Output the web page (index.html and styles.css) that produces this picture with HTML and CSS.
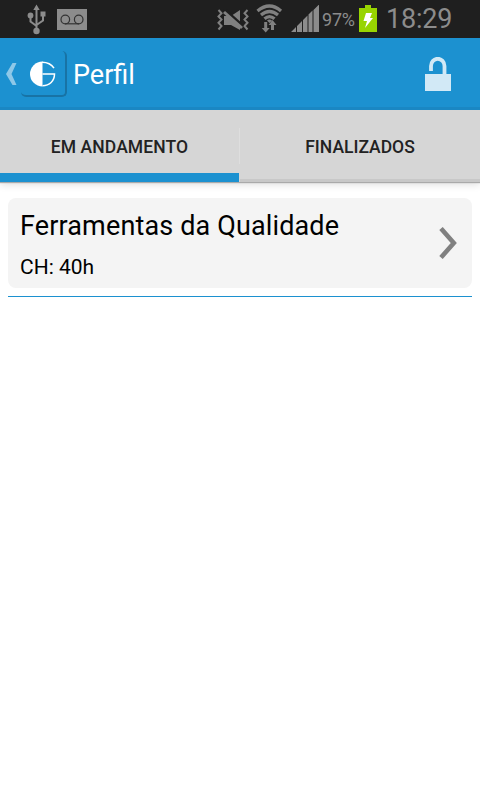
FILE: index.html
```html
<!DOCTYPE html>
<html lang="pt-BR">
<head>
    <meta charset="UTF-8">
    <meta name="viewport" content="width=device-width, initial-scale=1.0">
    <title>Perfil</title>
    <link rel="stylesheet" href="styles.css">
</head>
<body>
    <!-- Barra de status -->
    <div class="status-bar">
        <svg class="usb" width="20" height="32" viewBox="0 0 20 32">
            <path d="M9.500 5v22M3.500 12v5.500l6 4.500M16 10v6.500l-6.500 4.500" fill="none" stroke="#8c8c8c" stroke-width="2"/>
            <path d="M9.500 .5L12.700 6H6.300zM13.500 7.500h5v5h-5z" fill="#8c8c8c"/>
            <circle cx="3.500" cy="11.500" r="2.900" fill="#8c8c8c"/>
            <circle cx="9.500" cy="27" r="3.200" fill="#8c8c8c"/>
        </svg>
        <svg class="voicemail" width="30" height="21" viewBox="0 0 30 21">
            <path d="M0 0h30v21H0z" fill="#8c8c8c"/>
            <g fill="none" stroke="#333" stroke-width="1.200">
                <circle cx="8.300" cy="10.500" r="4.300"/>
                <circle cx="21.700" cy="10.500" r="4.300"/>
                <path d="M8 14.800h14"/>
            </g>
        </svg>
        <svg class="mute" width="34" height="22" viewBox="0 0 34 22">
            <path d="M1.500 1l3 3.200-3 3.200 3 3.200-3 3.200 3 3.200-3 3.500M30.500 1l-3 3.200 3 3.200-3 3.200 3 3.200-3 3.200 3 3.500" fill="none" stroke="#808080" stroke-width="2"/>
            <path d="M7 7h7l9-6v20l-9-5H7z" fill="#808080"/>
            <path d="M7 0L26 17" fill="none" stroke="#1f1f1f" stroke-width="3"/>
            <path d="M7 3L25 19" fill="none" stroke="#808080" stroke-width="3"/>
        </svg>
        <svg class="wifi" width="28" height="30" viewBox="0 0 28 30">
            <g fill="none" stroke="#808080" stroke-width="3.200">
                <path d="M1.500 7Q13.500 -3 25 7"/>
                <path d="M5 11q8.500-7 17 0"/>
                <path d="M8.500 14.800q5-4.500 10 0"/>
            </g>
            <path d="M11 16.500q2.500-1.800 5 0L13.500 19zM8.200 18h3v6h2.500L9.700 28.500 5.700 24h2.500zM15 26v-5h-2.500l4-5 4 5H18v5z" fill="#808080"/>
        </svg>
        <svg class="signal" width="30" height="28" viewBox="0 0 30 28">
            <path d="M0 27l5-5v5zM6 27v-6l5-5v11zM12 27V15l4.500-4.500V27zM17.500 27V9.500L21.500 5.500V27zM22.500 27V5l5-5H28v27z" fill="#8c8c8c"/>
        </svg>
        <span class="percent">97%</span>
        <svg class="battery" width="18" height="27" viewBox="0 0 18 27">
            <path d="M6 0h6v3h6v24H0V3h6z" fill="#98d401"/>
            <path d="M7 8h6l-2 5h3L6 23l2-7H4.500z" fill="#fff"/>
        </svg>
        <span class="clock">18:29</span>
    </div>

    <!-- Cabeçalho -->
    <header class="action-bar">
        <svg class="back" width="11" height="22" viewBox="0 0 11 22">
            <path d="M6.500 0H10.500L5.500 11 10.500 22H6.500L0 11z" fill="#8ec8e8"/>
        </svg>
        <div class="logo">
            <svg width="26" height="26" viewBox="0 0 26 26">
                <path d="M12.500 .5a12.300 12.300 0 0 0 0 25z" fill="#fff"/>
                <path d="M12 1.200c5 0 9.500 2 12 6M12.500 13h12c0 7-5 11.700-12 11.700" fill="none" stroke="#fff" stroke-width="1.500"/>
            </svg>
        </div>
        <h1>Perfil</h1>
        <svg class="lock" width="26" height="35" viewBox="0 0 26 35">
            <path d="M6 14V9a6.700 7.200 0 0 1 13.500 0v9" fill="none" stroke="#d2e9f6" stroke-width="3.800"/>
            <path d="M0 17h26v17H0z" fill="#d2e9f6"/>
        </svg>
    </header>

    <!-- Abas -->
    <nav class="tabs">
        <a class="tab active"><span>EM ANDAMENTO</span></a>
        <i class="divider"></i>
        <a class="tab"><span>FINALIZADOS</span></a>
    </nav>

    <!-- Lista de cursos -->
    <main class="list">
        <div class="item">
            <div class="card">
                <div class="info">
                    <h2>Ferramentas da Qualidade</h2>
                    <p>CH: 40h</p>
                </div>
                <svg class="arrow" width="18" height="32" viewBox="0 0 18 32">
                    <path d="M2 1.500L14.800 16 2 30.500" fill="none" stroke="#808080" stroke-width="4.600"/>
                </svg>
            </div>
        </div>
    </main>
</body>
</html>
```
FILE: styles.css
```css
* {
    margin: 0;
    padding: 0;
    box-sizing: border-box;
}

body {
    height: 100vh;
    font-family: Roboto, sans-serif;
    background: #fff;
    overflow: hidden;
}

svg {
    display: block;
    flex: none;
}

/* Barra de status */
.status-bar {
    display: flex;
    align-items: flex-start;
    height: 38px;
    padding-left: 27px;
    background: #1f1f1f;
    color: #8c8c8c;
}

.usb {
    margin-top: 4px;
}

.voicemail {
    margin: 9px 0 0 10px;
}

.mute {
    margin: 9px 0 0 130px;
}

.wifi {
    margin: 4px 0 0 5px;
}

.signal {
    margin: 5px 0 0 7px;
}

.percent {
    width: 37px;
    margin-left: 1px;
    padding-top: 9px;
    font-size: 18px;
    line-height: 22px;
    letter-spacing: -0.2px;
}

.battery {
    margin-top: 5px;
}

.clock {
    margin-left: 9px;
    padding-top: 3px;
    font-size: 27px;
    line-height: 32px;
    letter-spacing: -0.2px;
}

/* Cabeçalho */
.action-bar {
    position: relative;
    z-index: 1;
    display: flex;
    align-items: center;
    height: 72px;
    padding: 3px 29px 0 6px;
    background: #1c91d0;
    border-bottom: 3px solid #1a87c3;
    color: #fff;
}

.logo {
    display: flex;
    align-items: center;
    justify-content: center;
    width: 46px;
    height: 46px;
    margin-left: 4px;
    padding-top: 2px;
    border-radius: 5px;
    border-right: 2px solid #1873a5;
    border-bottom: 2px solid #1873a5;
}

.action-bar h1 {
    margin-left: 6px;
    padding-top: 2px;
    font-size: 27px;
    font-weight: 400;
    line-height: 32px;
}

.lock {
    margin-left: auto;
}

/* Abas */
.tabs {
    display: flex;
    height: 72px;
    background: #d6d6d6;
    box-shadow: 0 1px 1px #aaa, 0 2px 8px rgba(0, 0, 0, 0.15);
}

.tab {
    display: flex;
    flex: 1;
    align-items: center;
    justify-content: center;
    border-bottom: 3px solid #c8c8c8;
    color: #222;
    font-size: 17.5px;
    font-weight: 500;
}

.tab span {
    padding-top: 4px;
}

.tab.active {
    flex: 0 0 239px;
    border-bottom: 9px solid #1c91d0;
    letter-spacing: 0.1px;
}

.tab.active span {
    padding-top: 10px;
}

.divider {
    width: 1px;
    height: 36px;
    margin: 18px 0;
    background: #dedede;
}

/* Lista de cursos */
.list {
    padding: 16px 8px 0;
}

.item {
    padding-bottom: 8px;
    border-bottom: 1px solid #1c91d0;
}

.card {
    display: flex;
    align-items: center;
    justify-content: space-between;
    height: 90px;
    padding: 0 15px 0 12px;
    border-radius: 8px;
    background: #f4f4f4;
    color: #000;
}

.info {
    padding-top: 3px;
}

.card h2 {
    font-size: 27px;
    font-weight: 400;
    line-height: 32px;
    letter-spacing: 0.14px;
}

.card p {
    margin-top: 13px;
    font-size: 21px;
    line-height: 25px;
}
```
